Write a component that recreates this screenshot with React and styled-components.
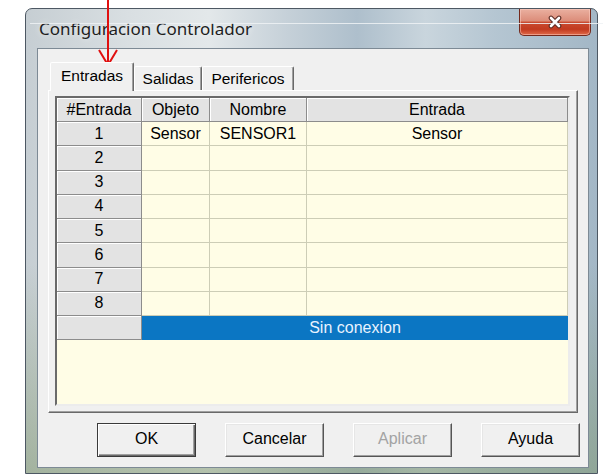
import React from "react";
import styled, { createGlobalStyle, css } from "styled-components";

const GlobalStyle = createGlobalStyle`
  html, body {
    margin: 0;
    padding: 0;
    background: #ffffff;
  }
  body {
    width: 603px;
    height: 474px;
    overflow: hidden;
    font-family: "Liberation Sans", Arial, sans-serif;
  }
`;

const Stage = styled.div`
  position: relative;
  width: 603px;
  height: 474px;
  box-sizing: border-box;
  padding: 8px 0 0 25px;
`;

const Window = styled.div`
  width: 573px;
  height: 466px;
  box-sizing: border-box;
  display: flex;
  flex-direction: column;
  border: 1px solid #4d5863;
  border-radius: 7px 7px 0 0;
  background:
    linear-gradient(180deg, rgba(255, 255, 255, 0) 55%, rgba(120, 145, 95, 0.45) 100%),
    linear-gradient(
      90deg,
      #c6ced3 0%,
      #d9dfe2 18%,
      #e3e8ea 32%,
      #c5d0d8 46%,
      #aebfcc 58%,
      #c9d5dd 70%,
      #b5c6d2 82%,
      #a3b7c6 100%
    );
`;

const TitleBar = styled.div`
  height: 39px;
  display: flex;
  align-items: flex-start;
  padding-left: 13px;
`;

const Title = styled.div`
  flex: 1;
  margin-top: 9px;
  font-family: "Noto Sans", "Open Sans", sans-serif;
  font-size: 17px;
  line-height: 22px;
  color: #1e1e1e;
  text-shadow: 0 0 6px rgba(255, 255, 255, 0.7);
`;

const CloseButton = styled.div`
  width: 72px;
  height: 27px;
  margin-right: 6px;
  box-sizing: border-box;
  border: 1px solid #74291c;
  border-top: none;
  border-radius: 0 0 5px 5px;
  display: flex;
  align-items: center;
  justify-content: center;
  background: linear-gradient(
    180deg,
    #eab0a0 0%,
    #dc8d7a 45%,
    #c94a30 52%,
    #c23a20 78%,
    #e06a48 100%
  );
  box-shadow: inset 0 0 0 1px rgba(255, 210, 200, 0.5);
`;

const Client = styled.div`
  height: 420px;
  margin: 0 8px 0 11px;
  box-sizing: border-box;
  border: 1px solid #7d8a95;
  background: #f0f0f0;
  display: flex;
  flex-direction: column;
`;

const TabStrip = styled.div`
  display: flex;
  align-items: flex-end;
  height: 28px;
  margin: 13px 0 0 12px;
`;

const Tab = styled.div`
  position: relative;
  z-index: ${({ $active }) => ($active ? 1 : 0)};
  box-sizing: border-box;
  width: ${({ $w }) => $w}px;
  height: ${({ $active }) => ($active ? 29 : 24)}px;
  margin-bottom: ${({ $active }) => ($active ? -1 : 0)}px;
  display: flex;
  align-items: center;
  justify-content: center;
  padding-bottom: ${({ $active }) => ($active ? 3 : 0)}px;
  border: 1px solid;
  border-bottom: none;
  border-color: #ffffff #696969 transparent #ffffff;
  border-radius: 2px 2px 0 0;
  box-shadow: inset -1px 0 #a0a0a0;
  background: #f0f0f0;
  font-size: 15.5px;
  color: #000;
`;

const Panel = styled.div`
  height: 323px;
  margin: 0 10px;
  box-sizing: border-box;
  border: 1px solid;
  border-color: #ffffff #696969 #696969 #ffffff;
  box-shadow: inset -1px -1px #a0a0a0;
  padding: 5px 7px 6px 6px;
  background: #f0f0f0;
`;

const Table = styled.div`
  height: 310px;
  box-sizing: border-box;
  display: grid;
  grid-template-columns: 85px 68px 97px 1fr;
  grid-template-rows: 24px repeat(9, 24.25px) 1fr;
  border: 2px solid;
  border-color: #6a6a6a #ececec #ececec #6a6a6a;
  background: #fffde6;
`;

const Cell = styled.div`
  box-sizing: border-box;
  display: flex;
  align-items: center;
  justify-content: center;
  overflow: hidden;
  white-space: nowrap;
  font-size: 16px;
  color: #000;
  ${({ $kind }) =>
    $kind === "fixed"
      ? css`
          background: #e3e3e3;
          border-right: 1px solid #8c8c8c;
          border-bottom: 1px solid #8c8c8c;
          box-shadow: inset 1px 1px #ffffff;
        `
      : $kind === "selected"
      ? css`
          grid-column: span 3;
          background: #0b76c3;
          color: #e8f3ff;
        `
      : css`
          background: #fffde6;
          border-right: 1px solid #cdcdb6;
          border-bottom: 1px solid #cdcdb6;
        `}
`;

const ButtonRow = styled.div`
  display: flex;
  gap: 29px;
  padding-left: 59px;
  margin-top: 10px;
`;

const Button = styled.div`
  width: 99px;
  height: 34px;
  box-sizing: border-box;
  display: flex;
  align-items: center;
  justify-content: center;
  padding-bottom: 2px;
  font-size: 16px;
  background: #f0f0f0;
  color: ${({ $disabled }) => ($disabled ? "#a3a3a3" : "#000")};
  border: 1px solid;
  ${({ $default }) =>
    $default
      ? css`
          border-color: #3a3a3a;
          box-shadow: inset 1px 1px #ffffff, inset -1px -1px #696969,
            inset -2px -2px #a0a0a0;
        `
      : css`
          border-color: #ffffff #555555 #555555 #ffffff;
          box-shadow: inset -1px -1px #a0a0a0, inset 1px 1px #e6e6e6;
        `}
`;

const Glare = styled.div`
  position: absolute;
  top: 23px;
  left: 30px;
  right: 0;
  height: 1px;
  background: rgba(238, 242, 245, 0.85);
  pointer-events: none;
`;

const Pointer = styled.svg`
  position: absolute;
  left: 97px;
  top: 0;
  width: 24px;
  height: 68px;
  pointer-events: none;
`;

const headers = ["#Entrada", "Objeto", "Nombre", "Entrada"];
const rows = [
  ["1", "Sensor", "SENSOR1", "Sensor"],
  ["2", "", "", ""],
  ["3", "", "", ""],
  ["4", "", "", ""],
  ["5", "", "", ""],
  ["6", "", "", ""],
  ["7", "", "", ""],
  ["8", "", "", ""],
];

export default function App() {
  return (
    <>
      <GlobalStyle />
      <Stage>
        <Window>
          <TitleBar>
            <Title>Configuracion Controlador</Title>
            <CloseButton>
              <svg width="16" height="14" viewBox="0 0 16 14">
                <path
                  d="M4 3 L12 11 M12 3 L4 11"
                  stroke="#5a2a22"
                  strokeWidth="4.6"
                  strokeLinecap="round"
                />
                <path
                  d="M4 3 L12 11 M12 3 L4 11"
                  stroke="#ffffff"
                  strokeWidth="2.6"
                  strokeLinecap="round"
                />
              </svg>
            </CloseButton>
          </TitleBar>
          <Client>
            <TabStrip>
              <Tab $active $w={84}>Entradas</Tab>
              <Tab $w={68}>Salidas</Tab>
              <Tab $w={92}>Perifericos</Tab>
            </TabStrip>
            <Panel>
              <Table>
                {headers.map((h) => (
                  <Cell key={h} $kind="fixed">
                    {h}
                  </Cell>
                ))}
                {rows.map((r) =>
                  r.map((v, i) => (
                    <Cell key={r[0] + "-" + i} $kind={i === 0 ? "fixed" : "data"}>
                      {v}
                    </Cell>
                  ))
                )}
                <Cell $kind="fixed" />
                <Cell $kind="selected">Sin conexion</Cell>
              </Table>
            </Panel>
            <ButtonRow>
              <Button $default>OK</Button>
              <Button>Cancelar</Button>
              <Button $disabled>Aplicar</Button>
              <Button>Ayuda</Button>
            </ButtonRow>
          </Client>
        </Window>
        <Glare />
        <Pointer viewBox="0 0 24 68">
          <path d="M11 0 L11 64" stroke="#e01010" strokeWidth="2" />
          <path
            d="M2 50 L11 65 L20 50"
            stroke="#e01010"
            strokeWidth="2"
            fill="none"
          />
        </Pointer>
      </Stage>
    </>
  );
}
